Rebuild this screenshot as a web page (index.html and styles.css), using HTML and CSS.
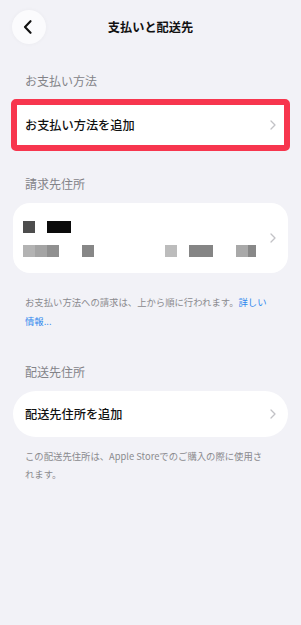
FILE: index.html
```html
<!DOCTYPE html>
<html lang="ja">
<head>
<meta charset="utf-8">
<link rel="stylesheet" href="styles.css">
</head>
<body>
<div class="screen">
  <header class="topbar">
    <div class="back">
      <svg width="10" height="14" viewBox="0 0 10 14"><path d="M7.5 1.2 L2 7 L7.5 12.8" fill="none" stroke="#111" stroke-width="2.1" stroke-linecap="round" stroke-linejoin="round"/></svg>
    </div>
    <h1 class="title">支払いと配送先</h1>
    <div></div>
  </header>

  <h2 class="sec sec-pay">お支払い方法</h2>
  <div class="highlight">
    <div class="row row-pay">
      <span class="row-text">お支払い方法を追加</span>
      <svg class="chev" width="6" height="10" viewBox="0 0 6 10"><path d="M1 1 L5 5 L1 9" fill="none" stroke="#c2c2c6" stroke-width="1.3" stroke-linecap="round" stroke-linejoin="round"/></svg>
    </div>
  </div>

  <h2 class="sec sec-bill">請求先住所</h2>
  <div class="card addr">
    <div class="blur">
      <div class="bl-row">
        <span class="blk k1"></span><span class="blk k2"></span>
      </div>
      <div class="bl-row">
        <span class="blk k3"></span><span class="blk k4"></span><span class="blk k5"></span><span class="blk k6"></span><span class="blk k7"></span><span class="blk k8"></span><span class="blk k9"></span><span class="blk k10"></span>
      </div>
    </div>
    <svg class="chev" width="6" height="10" viewBox="0 0 6 10"><path d="M1 1 L5 5 L1 9" fill="none" stroke="#c2c2c6" stroke-width="1.3" stroke-linecap="round" stroke-linejoin="round"/></svg>
  </div>
  <p class="note note1">お支払い方法への請求は、上から順に行われます。<a class="link">詳しい<br>情報...</a></p>

  <h2 class="sec sec-ship">配送先住所</h2>
  <div class="card ship">
    <span class="row-text">配送先住所を追加</span>
    <svg class="chev" width="6" height="10" viewBox="0 0 6 10"><path d="M1 1 L5 5 L1 9" fill="none" stroke="#c2c2c6" stroke-width="1.3" stroke-linecap="round" stroke-linejoin="round"/></svg>
  </div>
  <p class="note note2">この配送先住所は、Apple Storeでのご購入の際に使用さ<br>れます。</p>
</div>
</body>
</html>
```

FILE: styles.css
```css
* { box-sizing: border-box; }
html, body {
  margin: 0;
  padding: 0;
  background: #f2f2f7;
}
body {
  font-family: "Noto Sans CJK JP", "Noto Sans", sans-serif;
  color: #111;
  width: 301px;
  height: 625px;
  overflow: hidden;
}
.screen {
  display: flex;
  flex-direction: column;
}
.topbar {
  display: grid;
  grid-template-columns: 1fr auto 1fr;
  align-items: center;
  padding: 10px 12px 0 12px;
  height: 44px;
}
.back {
  width: 34px;
  height: 34px;
  border-radius: 50%;
  background: #fbfbfd;
  box-shadow: 0 0 4px rgba(0,0,0,0.04);
  display: flex;
  align-items: center;
  justify-content: center;
  padding-right: 2px;
}
.title {
  margin: 0;
  font-size: 12.2px;
  font-weight: 700;
  line-height: 20px;
  color: #111;
}
.sec {
  margin: 0;
  padding-left: 25px;
  font-size: 12px;
  font-weight: 400;
  line-height: 20px;
  color: #838388;
}
.sec-pay { margin-top: 27px; }
.sec-bill { margin-top: 23px; }
.sec-ship { margin-top: 31px; }

.highlight {
  margin: 8px 11px 0 11px;
  border: 6px solid #f7364e;
  border-radius: 5px;
  background: #fff;
}
.row {
  display: flex;
  align-items: center;
  justify-content: space-between;
  height: 40px;
  padding: 0 8px 0 8px;
}
.row-text {
  font-size: 12.2px;
  font-weight: 500;
  color: #111;
  line-height: 20px;
}
.chev { display: block; flex: none; }

.card {
  margin: 9px 13px 0 13px;
  background: #fff;
  display: flex;
  align-items: center;
  justify-content: space-between;
}
.addr {
  height: 70px;
  border-radius: 17px;
  padding: 0 12px 0 10px;
}
.ship {
  height: 46px;
  border-radius: 23px;
  padding: 0 12px 0 12px;
}
.blur {
  display: flex;
  flex-direction: column;
  gap: 12px;
  padding-top: 1px;
}
.bl-row {
  display: flex;
  height: 12px;
}
.blk { display: block; height: 12px; flex: none; }
.k1 { width: 12px; background: #4d4d4d; }
.k2 { width: 24px; margin-left: 12px; background: #0b0b0b; }
.k3 { width: 12px; background: #b3b3b3; }
.k4 { width: 12px; background: #a4a4a4; }
.k5 { width: 12px; background: #909090; }
.k6 { width: 12px; margin-left: 23px; background: #878787; }
.k7 { width: 12px; margin-left: 71px; background: #bcbcbc; }
.k8 { width: 24px; margin-left: 12px; background: #858585; }
.k9 { width: 12px; margin-left: 23px; background: #a9a9a9; }
.k10 { width: 8px; background: #888; }

.note {
  margin: 0;
  padding: 0 10px 0 25px;
  font-size: 9.35px;
  color: #8a8a8e;
  white-space: nowrap;
}
.note1 {
  margin-top: 20px;
  line-height: 19px;
}
.note2 {
  margin-top: 10px;
  line-height: 18px;
}
.link { color: #2b87ee; text-decoration: none; }
```
